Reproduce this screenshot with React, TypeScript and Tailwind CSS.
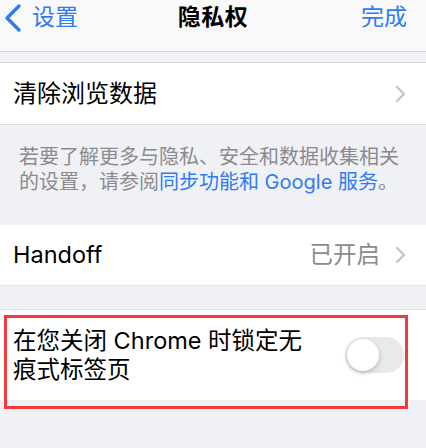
const font = "font-['Inter','Noto_Sans_CJK_SC',sans-serif]"

function Chevron() {
  return (
    <svg width="11" height="18" viewBox="0 0 11 18" className="shrink-0">
      <polyline points="2,2 9,9 2,16" fill="none" stroke="#c4c4c7" strokeWidth="2.4" strokeLinecap="round" strokeLinejoin="round" />
    </svg>
  )
}

export default function App() {
  return (
    <div className={`w-[426px] h-[448px] overflow-hidden bg-[#f0f1f4] ${font}`}>
      {/* Nav bar */}
      <div className="h-[52px] bg-[#f9f9f9] border-b border-[#d3d3d6]">
        <div className="h-[35px] grid grid-cols-[1fr_auto_1fr] items-center">
          <div className="flex items-center pl-[3px] text-[#2f7bf5] text-[23px] leading-none">
            <svg width="20" height="30" viewBox="0 0 20 30" className="mr-[9px] mt-[1px]">
              <polyline points="16,3 4,15 16,27" fill="none" stroke="#2f7bf5" strokeWidth="3.4" strokeLinecap="round" strokeLinejoin="round" />
            </svg>
            <span>设置</span>
          </div>
          <div className="text-[23px] font-bold text-black leading-none tracking-[0.5px]">隐私权</div>
          <div className="flex justify-end pr-[19px] text-[#2f7bf5] text-[23px] leading-none">完成</div>
        </div>
      </div>

      {/* Clear browsing data */}
      <div className="mt-[10px] h-[63px] bg-white border-y border-[#d9d9dc] flex items-center justify-between pl-[13px] pr-[20px]">
        <span className="text-[24px] text-black leading-none">清除浏览数据</span>
        <Chevron />
      </div>

      {/* Footer note */}
      <div className="pt-[20px] pb-[30px] pl-[19px] pr-[10px] text-[20px] leading-[25px] text-[#8b8b8f]">
        若要了解更多与隐私、安全和数据收集相关
        <br />
        的设置，请参阅<span className="text-[#2f7bf5]">同步功能和 Google 服务</span>。
      </div>

      {/* Handoff */}
      <div className="h-[61px] bg-white border-b border-[#e3e3e6] flex items-center justify-between pl-[13px] pr-[20px]">
        <span className="text-[23.5px] text-black leading-none">Handoff</span>
        <div className="flex items-center gap-[15px]">
          <span className="text-[23.5px] text-[#8b8b8f] leading-none">已开启</span>
          <Chevron />
        </div>
      </div>

      {/* Lock incognito tabs */}
      <div className="relative mt-[23px] h-[91px] bg-white border-t border-[#e3e3e6] flex items-center justify-between pl-[13px] pr-[22px]">
        <div className="text-[23.5px] leading-[29px] text-black">
          在您关闭 Chrome 时锁定无
          <br />
          痕式标签页
        </div>
        <div className="w-[59px] h-[36px] rounded-full bg-[#e9e9eb] flex items-center px-[2px]">
          <div className="w-[32px] h-[32px] rounded-full bg-white shadow-[0_2px_5px_rgba(0,0,0,0.22)]" />
        </div>
        <div className="absolute left-[4px] top-[5px] w-[404px] h-[94px] border-[3px] border-[#f23a3c]" />
      </div>
    </div>
  )
}
